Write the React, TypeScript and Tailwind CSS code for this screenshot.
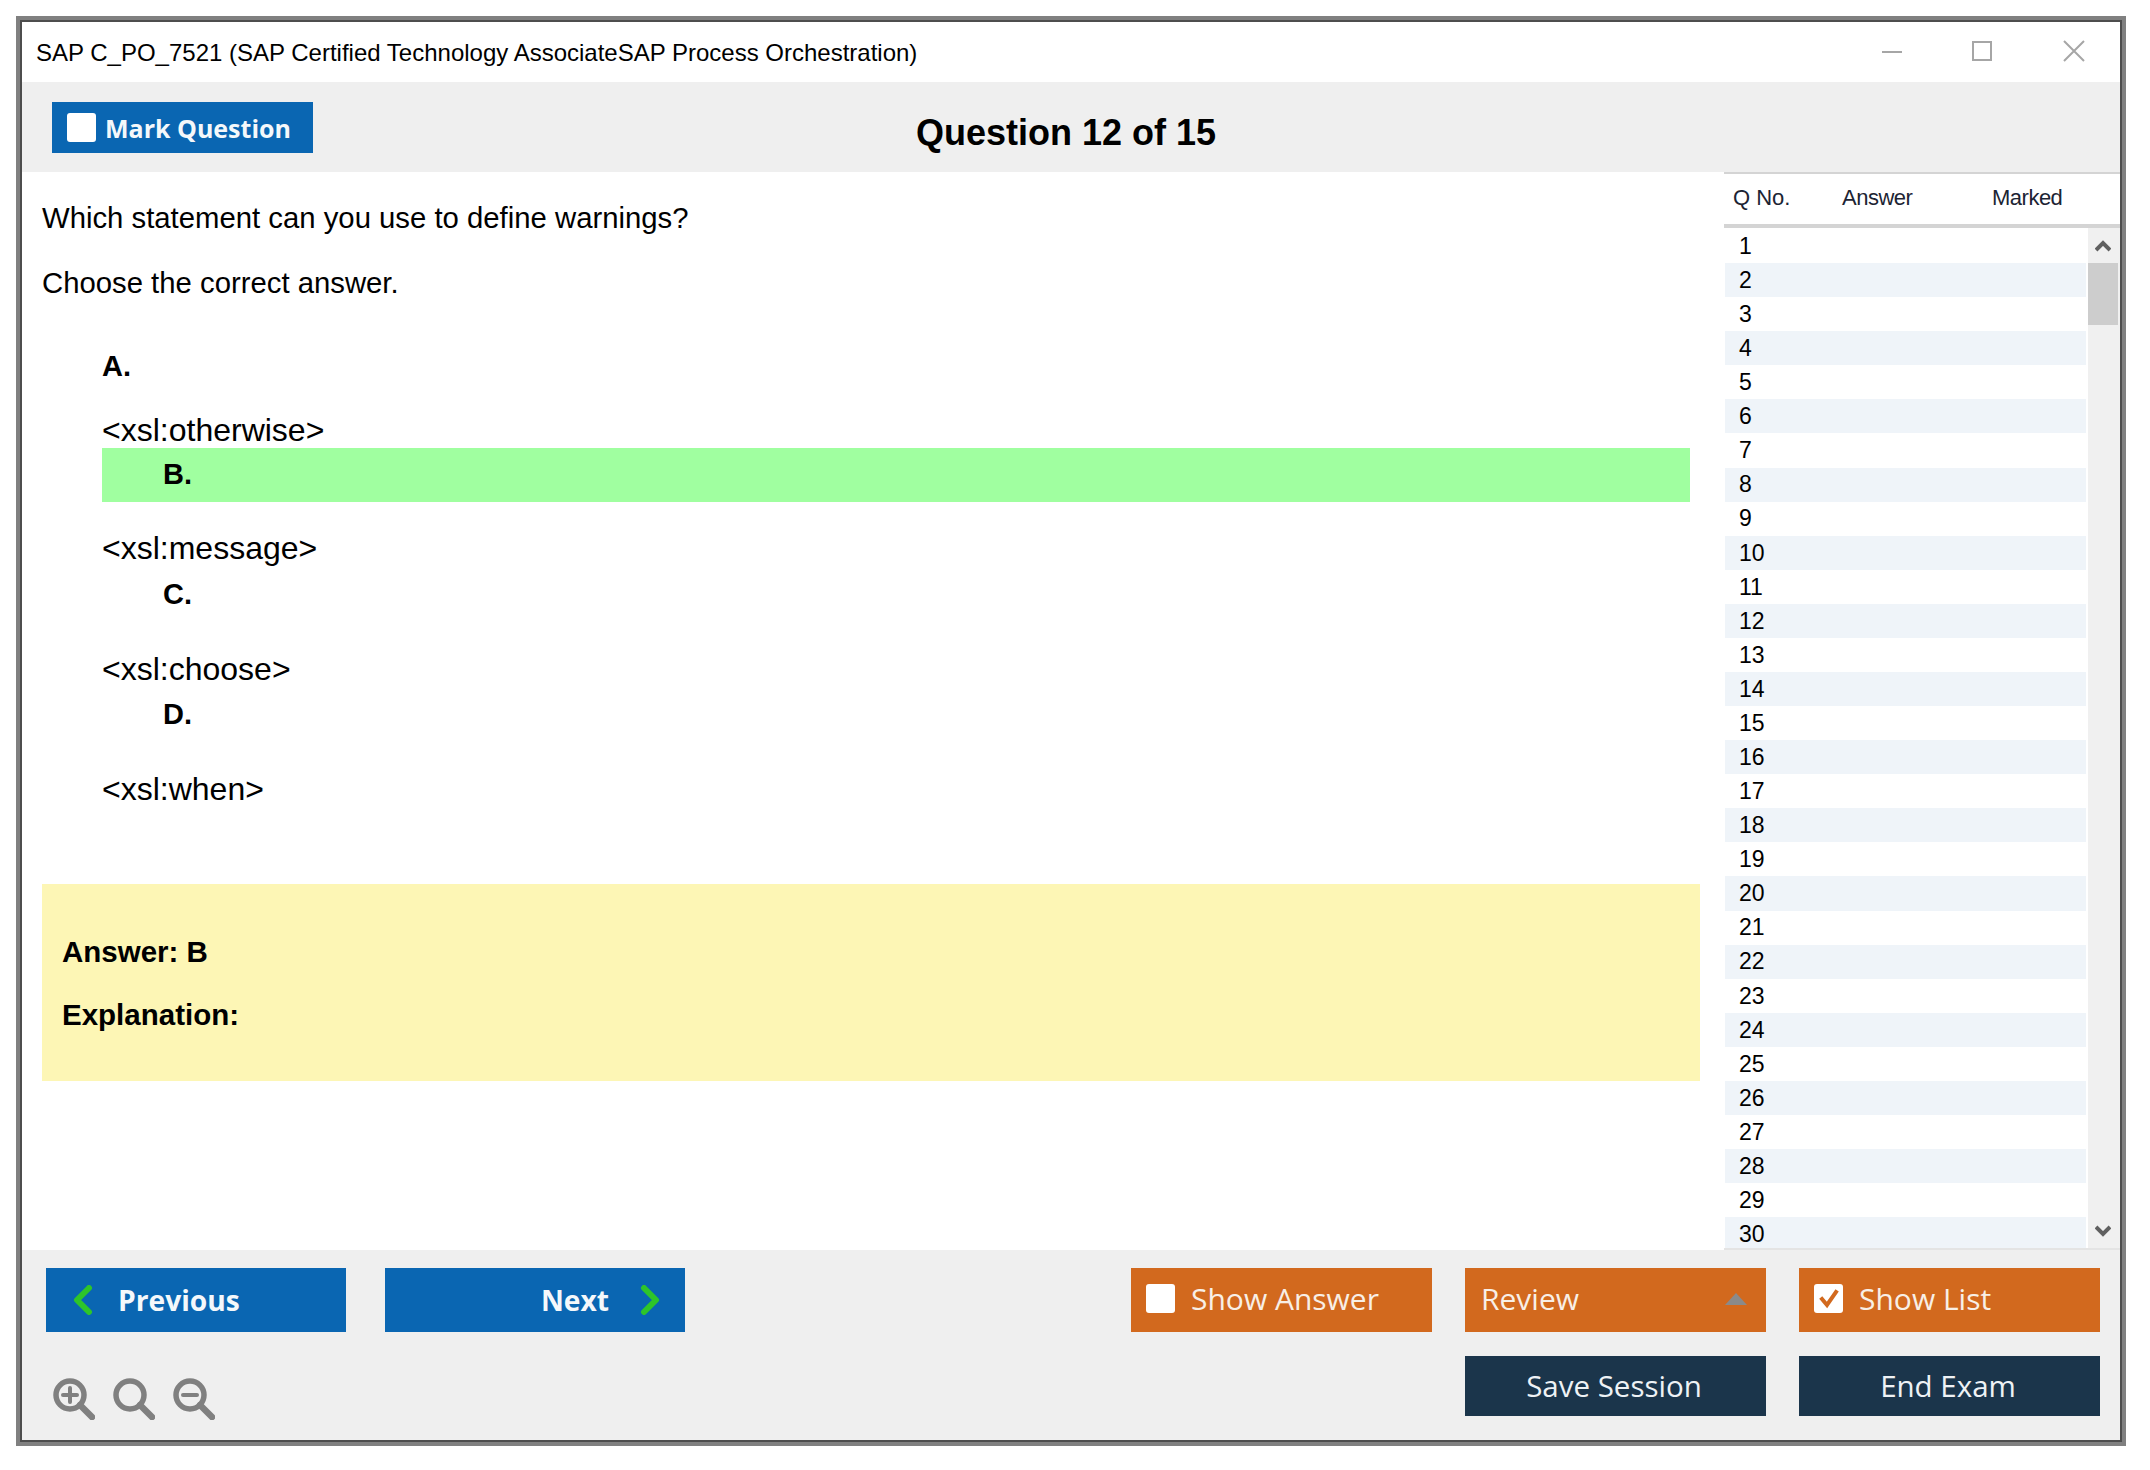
import type { ReactNode } from "react";

const rows = Array.from({ length: 30 }, (_, i) => i + 1);

function Check({ checked }: { checked?: boolean }) {
  return (
    <span className="flex h-[29px] w-[29px] shrink-0 items-center justify-center rounded-[3px] bg-white">
      {checked && (
        <svg width="22" height="22" viewBox="0 0 22 22" fill="none" stroke="#d2691e" strokeWidth="4" strokeLinecap="square">
          <path d="M4 11l5 6 9-13" />
        </svg>
      )}
    </span>
  );
}

function Chevron({ flip }: { flip?: boolean }) {
  return (
    <svg width="20" height="30" viewBox="0 0 20 30" fill="none" stroke="#2ec52a" strokeWidth="6" strokeLinecap="round" strokeLinejoin="round">
      <path d={flip ? "M4 3l12 12L4 27" : "M16 3L4 15l12 12"} />
    </svg>
  );
}

function OrangeButton({ children }: { children: ReactNode }) {
  return <div className="flex h-[64px] w-[301px] items-center gap-[16px] bg-[#d2691e] px-[15px] pb-[3px] text-[30px] text-[#f8efe6]">{children}</div>;
}

function NavyButton({ children }: { children: ReactNode }) {
  return <div className="flex h-[60px] w-[301px] items-center justify-center bg-[#1b354b] pr-[3px] text-[29.5px] text-[#eef2f5]">{children}</div>;
}

function ZoomIcon({ mark }: { mark?: "plus" | "minus" }) {
  return (
    <svg width="42" height="42" viewBox="0 0 42 42" fill="none" stroke="#808080" strokeWidth="5.5" strokeLinecap="round">
      <circle cx="17" cy="17" r="14" />
      <path d="M27 27l12 12" strokeWidth="6.5" />
      {mark && <path d="M10 17h14" strokeWidth="4" />}
      {mark === "plus" && <path d="M17 10v14" strokeWidth="4" />}
    </svg>
  );
}

function Option({ letter, text }: { letter: string; text: string }) {
  return (
    <div>
      <div className="ml-[61px] text-[29px] leading-[36px] font-bold">{letter}</div>
      <div className="mt-[39px] text-[32px] leading-[36px]">{text}</div>
    </div>
  );
}

export default function App() {
  return (
    <div className="min-h-[1470px] bg-white pt-[16px] pl-[16px] font-['Liberation_Sans',sans-serif] text-black">
      <div className="flex h-[1430px] w-[2110px] flex-col border-[4px] border-[#808080]">
        <div className="flex h-full flex-col border-2 border-[#4d4d4d]">
          {/* title bar */}
          <div className="flex h-[60px] items-center bg-white pt-[2px] pl-[14px] text-[24px]">
            <span>SAP C_PO_7521 (SAP Certified Technology AssociateSAP Process Orchestration)</span>
            <div className="mb-[2px] ml-auto flex items-center">
              <svg className="mb-[2px]" width="20" height="20" viewBox="0 0 20 20" stroke="#a6a6a6" strokeWidth="2" fill="none">
                <path d="M0 11h20" />
              </svg>
              <svg className="mb-[2px] ml-[70px]" width="20" height="20" viewBox="0 0 20 20" stroke="#a6a6a6" strokeWidth="2" fill="none">
                <rect x="1" y="1" width="18" height="18" />
              </svg>
              <svg className="mr-[35px] mb-[2px] ml-[71px]" width="22" height="22" viewBox="0 0 22 22" stroke="#a6a6a6" strokeWidth="2" fill="none">
                <path d="M1 1l20 20M21 1L1 21" />
              </svg>
            </div>
          </div>

          {/* header */}
          <div className="relative flex h-[90px] items-start bg-[#efefef] pt-[20px] pl-[30px]">
            <div className="flex h-[51px] w-[261px] items-center gap-[9px] bg-[#0a66b2] pl-[15px] font-['Open_Sans',sans-serif] text-[25px] font-bold text-[#f4f8fb]">
              <Check />
              <span className="mt-[2px]">Mark Question</span>
            </div>
            <div className="absolute top-[29px] left-[894px] text-[36px] leading-[44px] font-bold">Question 12 of 15</div>
          </div>

          {/* main */}
          <div className="flex min-h-0 flex-1">
            <div className="w-[1702px] bg-white pt-[28px] pl-[20px]">
              <div className="text-[29.3px] leading-[36px]">Which statement can you use to define warnings?</div>
              <div className="mt-[29px] text-[29.3px] leading-[36px]">Choose the correct answer.</div>
              <div className="mt-[47px] ml-[60px] w-[1588px]">
                <div className="text-[29px] leading-[36px] font-bold">A.</div>
                <div className="mt-[28px] text-[32px] leading-[36px]">&lt;xsl:otherwise&gt;</div>
                <div className="flex h-[54px] items-center bg-[#a0ffa0] pl-[61px] text-[29px] font-bold">B.</div>
                <div className="mt-[28px] text-[32px] leading-[36px]">&lt;xsl:message&gt;</div>
                <div className="mt-[10px]">
                  <Option letter="C." text="<xsl:choose>" />
                </div>
                <div className="mt-[9px]">
                  <Option letter="D." text="<xsl:when>" />
                </div>
              </div>
              <div className="mt-[77px] h-[197px] w-[1658px] bg-[#fdf6b5] pt-[50px] pl-[20px] text-[29.5px] leading-[36px] font-bold">
                <div>Answer: B</div>
                <div className="mt-[27px]">Explanation:</div>
              </div>
            </div>

            {/* question list */}
            <div className="flex min-w-0 flex-1 flex-col bg-white">
              <div className="relative h-[56px] shrink-0 border-t-2 border-b-[4px] border-[#d4d4d4] text-[22px] leading-[48px] text-[#1c2433]">
                <span className="absolute left-[9px]">Q No.</span>
                <span className="absolute left-[118px] tracking-[-0.5px]">Answer</span>
                <span className="absolute left-[268px] tracking-[-0.5px]">Marked</span>
              </div>
              <div className="flex min-h-0 flex-1 overflow-hidden border-b-2 border-[#e4e4e4]">
                <div className="min-w-0 flex-1 pt-px pl-px">
                  {rows.map((n) => (
                    <div key={n} className="flex h-[34.08px] items-center pl-[14px] text-[23px] even:bg-[#eff4f9]">
                      {n}
                    </div>
                  ))}
                </div>
                <div className="ml-[2px] flex w-[32px] shrink-0 flex-col items-center bg-[#f0f0f0] pr-[2px]">
                  <svg className="mt-[12px]" width="16" height="12" viewBox="0 0 16 12" fill="none" stroke="#606060" strokeWidth="4">
                    <path d="M1 10l7-7 7 7" />
                  </svg>
                  <div className="mt-[11px] h-[62px] w-full bg-[#cdcdcd]" />
                  <svg className="mt-auto mb-[11px]" width="16" height="12" viewBox="0 0 16 12" fill="none" stroke="#606060" strokeWidth="4">
                    <path d="M1 2l7 7 7-7" />
                  </svg>
                </div>
              </div>
            </div>
          </div>

          {/* bottom bar */}
          <div className="flex h-[190px] shrink-0 justify-between bg-[#efefef] pt-[18px] pr-[20px] pl-[24px] font-['Open_Sans',sans-serif]">
            <div>
              <div className="flex gap-[39px] text-[28.2px] font-bold text-[#f4f8fb]">
                <div className="flex h-[64px] w-[300px] items-center gap-[25px] bg-[#0a66b2] pl-[27px]">
                  <Chevron />
                  <span>Previous</span>
                </div>
                <div className="flex h-[64px] w-[300px] items-center justify-end gap-[31px] bg-[#0a66b2] pr-[25px]">
                  <span>Next</span>
                  <Chevron flip />
                </div>
              </div>
              <div className="mt-[46px] ml-[7px] flex gap-[18px]">
                <ZoomIcon mark="plus" />
                <ZoomIcon />
                <ZoomIcon mark="minus" />
              </div>
            </div>
            <div className="flex flex-col items-end">
              <div className="flex gap-[33px]">
                <OrangeButton>
                  <Check />
                  <span>Show Answer</span>
                </OrangeButton>
                <OrangeButton>
                  <span className="ml-px">Review</span>
                  <svg className="mr-[4px] ml-auto" width="22" height="12" viewBox="0 0 22 12" fill="#8a8a8a">
                    <path d="M11 0l11 12H0z" />
                  </svg>
                </OrangeButton>
                <OrangeButton>
                  <Check checked />
                  <span>Show List</span>
                </OrangeButton>
              </div>
              <div className="mt-[24px] flex gap-[33px]">
                <NavyButton>Save Session</NavyButton>
                <NavyButton>End Exam</NavyButton>
              </div>
            </div>
          </div>
        </div>
      </div>
    </div>
  );
}
